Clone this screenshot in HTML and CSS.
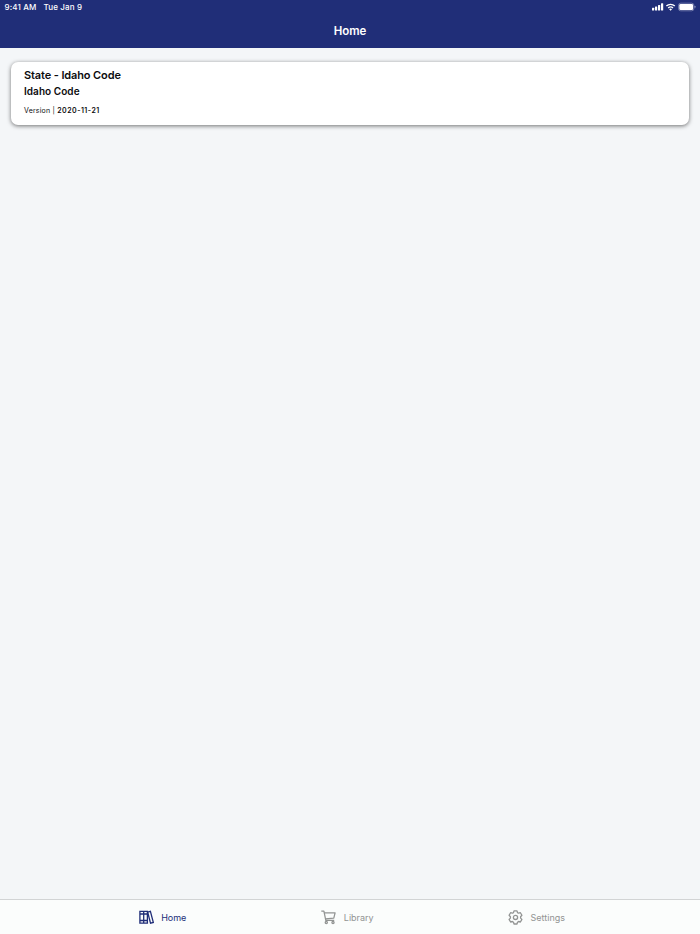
FILE: index.html
```html
<!DOCTYPE html>
<html lang="en">

<head>
    <meta charset="UTF-8">
    <meta name="viewport" content="width=device-width, initial-scale=1.0">
    <title>Home</title>
    <link rel="stylesheet" href="styles.css">
</head>

<body>
    <header class="header">
        <div class="status-bar">
            <span class="time">9:41 AM</span>
            <span class="date">Tue Jan 9</span>
            <svg class="status-icons" width="44" height="10" viewBox="0 0 44 10" fill="#fff">
                <rect x="0" y="5.7" width="2.2" height="2.8" rx="0.5" />
                <rect x="3" y="4.5" width="2.2" height="4" rx="0.5" />
                <rect x="6" y="3" width="2.2" height="5.5" rx="0.5" />
                <rect x="9" y="1.3" width="2.2" height="7.2" rx="0.5" />
                <g fill="none" stroke="#fff" stroke-width="1.4">
                    <path d="M14.4 4.1a6 6 0 0 1 8.4 0" />
                    <path d="M16.2 6a3.5 3.5 0 0 1 4.8 0" />
                </g>
                <path d="M17.2 7.2a2 2 0 0 1 2.8 0l-1.4 1.6z" />
                <rect x="26.5" y="1.2" width="15.4" height="7.6" rx="2.2" fill="none" stroke="#8f96bd" stroke-width="0.7" />
                <rect x="27.3" y="2" width="13.8" height="6" rx="1.3" />
                <rect x="42.6" y="3.8" width="0.8" height="2.4" rx="0.4" fill="#8f96bd" />
            </svg>
        </div>
        <h1 class="title">Home</h1>
    </header>

    <main class="content">
        <div class="card">
            <h2 class="card-title">State - Idaho Code</h2>
            <h3 class="card-subtitle">Idaho Code</h3>
            <p class="card-version">Version | <b>2020-11-21</b></p>
        </div>
    </main>

    <nav class="tab-bar">
        <a class="tab active">
            <svg width="15" height="15" viewBox="0 0 15 15" fill="none" stroke="currentColor" stroke-width="1.3">
                <path d="M0.9 1.3h3.8v11.9H0.9zM4.7 1.3h3.7v11.9H4.7zM0.9 4h7.5M0.9 10.5h7.5" />
                <path d="M8.7 2.2l2.7-.8 2.9 11-2.8.8z" />
            </svg>
            <span>Home</span>
        </a>
        <a class="tab">
            <svg width="15" height="15" viewBox="0 0 15 15" fill="none" stroke="currentColor" stroke-width="1.25" stroke-linejoin="round">
                <path d="M0.3 1.2h2.6l1.9 9.2h8.4M3.2 2.8h10.9l-1.3 5.4-8.4.6" />
                <circle cx="5.3" cy="12.5" r="1.1" />
                <circle cx="12" cy="12.5" r="1.1" />
            </svg>
            <span>Library</span>
        </a>
        <a class="tab">
            <svg width="15" height="15" viewBox="0 0 15 15" fill="none" stroke="currentColor" stroke-width="1.3" stroke-linejoin="round">
                <path d="M6 .8h3l.5 1.8 1.1.6 1.8-.5 1.5 2.6-1.3 1.4v1.4l1.3 1.3-1.5 2.6-1.8-.5-1.1.7-.5 1.8H6l-.5-1.8-1.1-.7-1.8.5-1.5-2.6 1.3-1.3V6.7L1.1 5.3l1.5-2.6 1.8.5 1.1-.6z" />
                <circle cx="7.5" cy="7.4" r="2.1" />
            </svg>
            <span>Settings</span>
        </a>
    </nav>
</body>

</html>
```
FILE: styles.css
```css
* {
    box-sizing: border-box;
}

body {
    font-family: Inter, "Liberation Sans", sans-serif;
    background-color: #f4f6f8;
    display: flex;
    flex-direction: column;
    height: 100vh;
    margin: 0;
}

h1,
h2,
h3,
p {
    margin: 0;
}

.header {
    height: 48px;
    background-color: #202e78;
    color: #fff;
}

.status-bar {
    display: flex;
    align-items: center;
    height: 14px;
    padding: 0 4px 0 4.5px;
    font-size: 8px;
    font-weight: 500;
    letter-spacing: 0.14px;
}

.date {
    margin-left: 7px;
}

.status-icons {
    margin-left: auto;
}

.title {
    font-size: 11.5px;
    font-weight: 600;
    line-height: 35px;
    text-align: center;
}

.content {
    flex: 1;
    padding: 14px 11px 14px 10.5px;
}

.card {
    height: 63px;
    padding: 5px 13.5px;
    background-color: #fff;
    border-radius: 7px;
    box-shadow: 0 1px 4px rgba(0, 0, 0, 0.55);
    color: #0c0c0e;
}

.card-title {
    font-size: 11px;
    font-weight: 600;
    letter-spacing: -0.12px;
    line-height: 16px;
}

.card-subtitle {
    font-size: 10px;
    font-weight: 600;
    letter-spacing: 0.05px;
    line-height: 16px;
}

.card-version {
    margin-top: 6px;
    font-size: 7px;
    letter-spacing: 0.2px;
    line-height: 11px;
}

.card-version b {
    font-weight: 600;
    letter-spacing: 0.5px;
}

.tab-bar {
    display: flex;
    justify-content: center;
    height: 35px;
    border-top: 1px solid #d2d4d5;
    background-color: #fbfdfc;
}

.tab {
    display: flex;
    align-items: center;
    justify-content: center;
    gap: 7.5px;
    width: 187px;
    padding-right: 1px;
    color: #929493;
    font-size: 9px;
}

.tab:nth-child(2) {
    padding-right: 5px;
}

.tab.active {
    color: #202e78;
}
```
